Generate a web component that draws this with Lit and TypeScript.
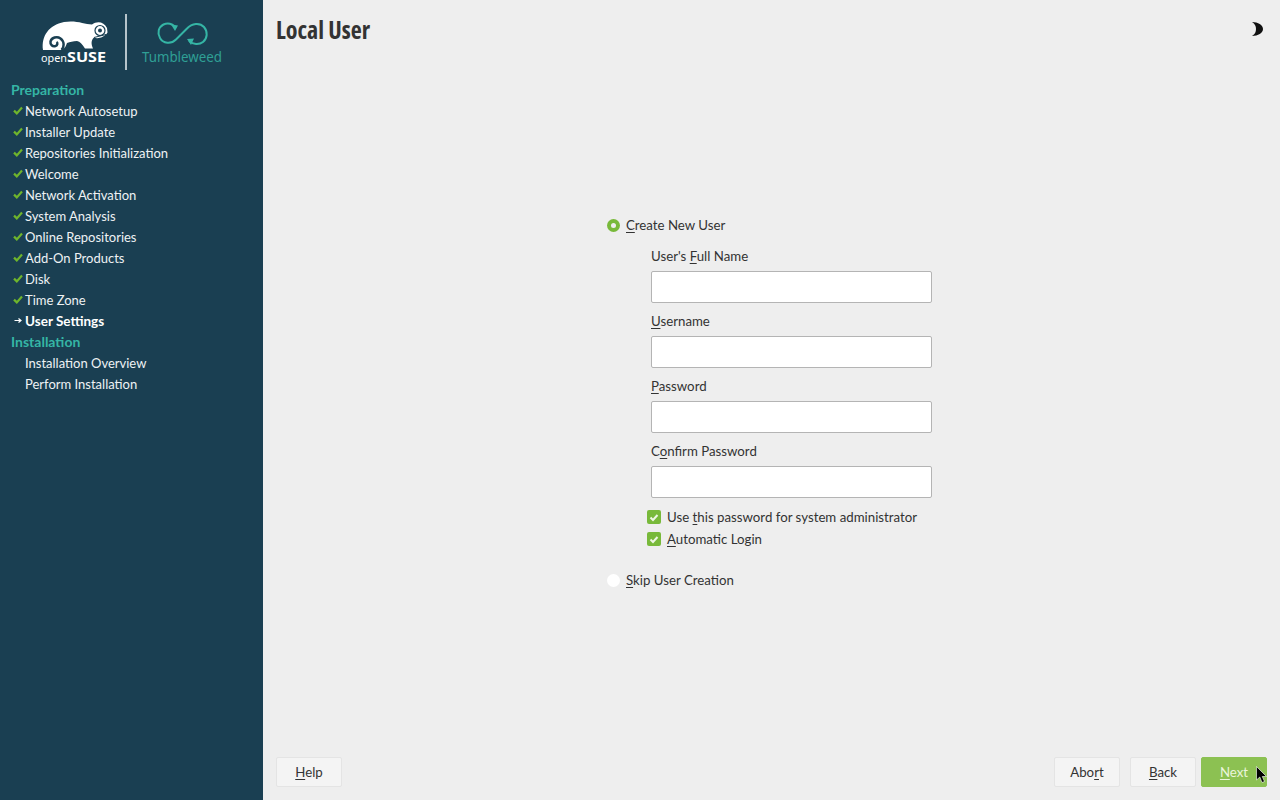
import { LitElement, html, css, svg } from "lit";
import { customElement } from "lit/decorators.js";

const steps: [string, string][] = [
  ["Network Autosetup", "done"], ["Installer Update", "done"], ["Repositories Initialization", "done"],
  ["Welcome", "done"], ["Network Activation", "done"], ["System Analysis", "done"],
  ["Online Repositories", "done"], ["Add-On Products", "done"], ["Disk", "done"], ["Time Zone", "done"],
  ["User Settings", "current"],
];

@customElement("app-root")
export class AppRoot extends LitElement {
  static styles = css`
    :host { display: flex; width: 1280px; height: 800px; overflow: hidden; font-family: "Lato", "Noto Sans", sans-serif; font-size: 13.25px; color: #333; background: #eee; }
    * { box-sizing: border-box; }
    u { text-underline-offset: 2px; text-decoration-thickness: 1px; }
    .side { width: 263px; background: #1a3f52; color: #eef2f4; flex: none; font-size: 13px; }
    .logo { display: block; width: 263px; height: 79px; }
    .logo text { font-family: "Noto Sans", sans-serif; }
    .steps { padding: 0 0 0 11px; }
    .head { height: 21px; line-height: 19px; margin: 1px 0 -1px; font-size: 14px; font-weight: 700; color: #35b5a5; }
    .step { height: 21px; display: flex; align-items: center; }
    .mark { width: 14px; padding-left: 2px; flex: none; display: flex; align-items: center; }
    .current { font-weight: 700; font-size: 13.5px; color: #fff; }
    .main { flex: 1; display: flex; flex-direction: column; padding: 0 13px 13px; min-width: 0; position: relative; }
    .top { height: 58px; display: flex; justify-content: space-between; align-items: center; }
    h1 { margin: 0; font-family: "Open Sans", sans-serif; font-stretch: condensed; font-size: 24px; font-weight: 700; color: #333; }
    .moon { display: block; margin-right: 4px; }
    .body { flex: 1; display: flex; align-items: center; justify-content: center; padding-bottom: 10px; }
    .form { width: 329px; }
    .radio { display: flex; align-items: center; height: 20px; gap: 6px; }
    .dot { width: 13px; height: 13px; border-radius: 50%; background: #fff; flex: none; display: flex; align-items: center; justify-content: center; }
    .dot.on { background: #78b93a; }
    .dot.on::after { content: ""; width: 5px; height: 5px; border-radius: 50%; background: #eee; }
    .fields { padding-left: 44px; width: 325px; }
    .field { height: 65px; display: flex; flex-direction: column; }
    .field:first-child { margin-top: 12px; }
    .field label { height: 19px; line-height: 19px; margin-bottom: 5px; }
    .input { height: 32px; width: 281px; background: #fff; border: 1px solid #b4b4b4; border-radius: 2px; }
    .checks { margin-top: -1px; padding-left: 44px; }
    .check { display: flex; align-items: center; height: 22px; gap: 6px; margin-left: -4px; }
    .box { width: 14px; height: 14px; background: #78b93a; border-radius: 2px; display: flex; align-items: center; justify-content: center; flex: none; }
    .skip { margin-top: 20px; }
    .foot { display: flex; align-items: center; height: 30px; }
    .btn { width: 66px; height: 30px; display: flex; align-items: center; justify-content: center; background: #f4f4f4; border: 1px solid #e4e4e4; border-radius: 2px; color: #333; }
    .spacer { flex: 1; }
    .btn.back { margin: 0 5px 0 10px; }
    .btn.next { background: #8cc152; border-color: #8cc152; color: #eaf5dc; }
    .cursor { position: absolute; right: 13px; bottom: 17px; display: block; }
  `;

  private check() {
    return html`<svg width="10" height="9" viewBox="0 0 10 9"><path d="M1 4.600 3.800 7.400 9 1.500" fill="none" stroke="#6fb52c" stroke-width="2.200"/></svg>`;
  }

  private logo() {
    return html`<svg class="logo" viewBox="0 0 263 79">
      ${svg`<path fill="#fff" d="M43 50C41 36 49 25 64 22 76 20 84 24 92 24.500 97 20.500 104 21.500 107 28L107.500 32.500C104 38 97 39 94 37.500 91 40 91 44 93 48.500L85 48.500C82 44 80 41.500 77 41 73 41 70 42 67 43 66 46 65 48 62 50Z"/>
      <path fill="none" stroke="#1a3f52" stroke-width="2.500" d="M56.500 42C58 43 57.500 45.500 55.500 46 52.500 47 50 44.500 50.500 41.500 51.500 37.500 57 36 60.500 38.500 64.500 41.500 64.500 47 61.500 50"/>
      <circle cx="100" cy="30.500" r="5" fill="none" stroke="#1a3f52" stroke-width="1.200"/>
      <circle cx="100" cy="30.500" r="2" fill="#1a3f52"/>
      <path d="M94 37.500 106 34.500" stroke="#1a3f52" stroke-width="1" fill="none"/>
      <text x="41" y="62" font-size="11.500" fill="#fff" textLength="26" lengthAdjust="spacingAndGlyphs">open</text>
      <text x="67" y="62" font-size="15" font-weight="700" fill="#fff" textLength="39" lengthAdjust="spacingAndGlyphs">SUSE</text>
      <rect x="125" y="14" width="2" height="56" fill="#b6c4cb"/>
      <path fill="none" stroke="#35b5a5" stroke-width="2" d="M176 27.500C172 23.500 167 22.800 163.500 24.500 158.500 27 157 33 160 38 163 43.500 171 44.500 176 39.500L187 28.500C192 23 200 22.500 204 27 208 31.500 207.500 38.500 203 42 199 45 193 44.500 189 41"/>
      <path fill="#35b5a5" d="M171 24.500 178 25.500 175 31ZM194 38.500 187 39 191 45Z"/>
      <text x="142" y="62" font-size="14.500" fill="#2f9f95" textLength="80" lengthAdjust="spacingAndGlyphs">Tumbleweed</text>`}
    </svg>`;
  }

  render() {
    return html`
      <aside class="side">
        ${this.logo()}
        <div class="steps">
          <div class="head">Preparation</div>
          ${steps.map(([t, s]) => html`<div class="step ${s === "current" ? "current" : ""}">
            <span class="mark">${s === "done" ? this.check() : html`<svg width="10" height="7" viewBox="0 0 10 7"><path d="M1.500 3.500H7.500M5.500 1.500 8 3.500 5.500 5.500" fill="none" stroke="#fff" stroke-width="1.200"/></svg>`}</span>${t}</div>`)}
          <div class="head">Installation</div>
          <div class="step"><span class="mark"></span>Installation Overview</div>
          <div class="step"><span class="mark"></span>Perform Installation</div>
        </div>
      </aside>
      <main class="main">
        <div class="top">
          <h1>Local User</h1>
          <svg class="moon" width="11" height="14" viewBox="0 0 11 14"><path d="M0 0C6 0 11 3 11 7S6 14 0 14C3 12 4 10 4 7S3 2 0 0Z" fill="#111"/></svg>
        </div>
        <div class="body">
          <div class="form">
            <div class="radio"><span class="dot on"></span><span><u>C</u>reate New User</span></div>
            <div class="fields">
              ${[
                [html`User's <u>F</u>ull Name`],
                [html`<u>U</u>sername`],
                [html`<u>P</u>assword`],
                [html`C<u>o</u>nfirm Password`],
              ].map(([l]) => html`<div class="field"><label>${l}</label><div class="input"></div></div>`)}
            </div>
            <div class="checks">
              <div class="check"><span class="box">${this.tick()}</span><span>Use <u>t</u>his password for system administrator</span></div>
              <div class="check"><span class="box">${this.tick()}</span><span><u>A</u>utomatic Login</span></div>
            </div>
            <div class="radio skip"><span class="dot"></span><span><u>S</u>kip User Creation</span></div>
          </div>
        </div>
        <div class="foot">
          <div class="btn"><span><u>H</u>elp</span></div>
          <div class="spacer"></div>
          <div class="btn"><span>Abo<u>r</u>t</span></div>
          <div class="btn back"><span><u>B</u>ack</span></div>
          <div class="btn next"><span><u>N</u>ext</span></div>
        </div>
        <svg class="cursor" width="11" height="17" viewBox="0 0 11 17"><path d="M.5 .5V14L3.800 11 6 16.500 8.500 15.500 6.300 10.500H10.500Z" fill="#000" stroke="#fff" stroke-width=".6"/></svg>
      </main>
    `;
  }

  private tick() {
    return html`<svg width="10" height="9" viewBox="0 0 10 9"><path d="M1.500 4.500 4 7 8.500 2" fill="none" stroke="#eef6e4" stroke-width="2"/></svg>`;
  }
}
